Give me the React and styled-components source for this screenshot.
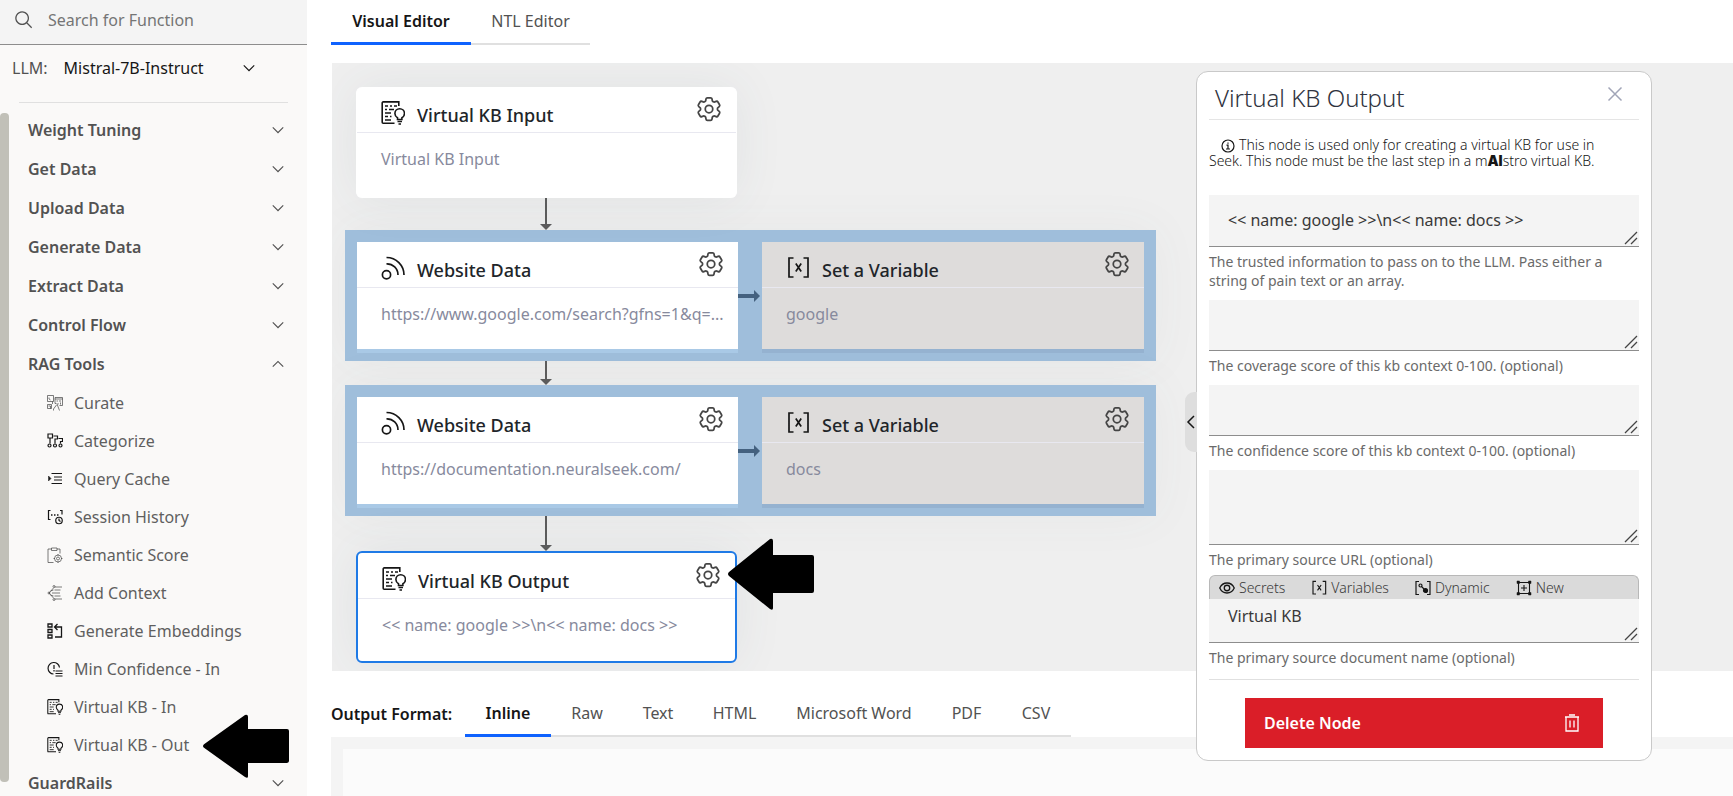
import React from "react";
import styled, { createGlobalStyle, css } from "styled-components";
import { HiOutlineCog6Tooth } from "react-icons/hi2";

const GlobalStyle = createGlobalStyle`
  *, *::before, *::after { box-sizing: border-box; }
  body { margin: 0; background: #ffffff; }
  body, button, input, select, textarea {
    font-family: "Noto Sans", "Liberation Sans", sans-serif;
    font-size: 16px;
  }
  button { border: 0; padding: 0; background: none; color: inherit; cursor: pointer; }
  h2, p, ul { margin: 0; padding: 0; }
  li { list-style: none; }
`;

/* ---------- icons ---------- */

const Glyph = styled.svg`
  display: block;
  flex: none;
  fill: none;
  stroke: currentColor;
`;

const SearchIcon = () => (
  <Glyph width="20" height="20" viewBox="0 0 32 32" aria-hidden="true">
    <path stroke="none" fill="currentColor" d="M29,27.5859l-7.5521-7.5521a11.0177,11.0177,0,1,0-1.4141,1.4141L27.5859,29ZM4,13a9,9,0,1,1,9,9A9.01,9.01,0,0,1,4,13Z" />
  </Glyph>
);

const Chevron = ({ up, size = 18 }) => (
  <Glyph width={size} height={size} viewBox="0 0 16 16" aria-hidden="true">
    <path stroke="none" fill="currentColor" d={up ? "M8 5l5 5-.7.7L8 6.4l-4.3 4.3L3 10z" : "M8 11L3 6l.7-.7L8 9.6l4.3-4.3.7.7z"} />
  </Glyph>
);

const DocBulbIcon = ({ size = 24 }) => (
  <Glyph width={size} height={size} viewBox="0 0 24 24" strokeWidth="1.6" aria-hidden="true">
    <path d="M13.5 22.2H2.2a1 1 0 0 1-1-1V1.9a1 1 0 0 1 1-1h15.6V5" />
    <path d="M4 5h3M9 5h2M13 5h3M4 8.5h2M8 8.5h5M4 12h6M4 15.5h3M9 15.5h1.500M4 19h6" strokeWidth="1.3" />
    <path d="M16.500 18.500v-1.700c-1.600-1-2.600-2.400-2.600-4.300a4.800 4.800 0 0 1 9.600 0c0 1.900-1 3.300-2.600 4.300v1.700z" />
    <path d="M16.500 20.500h4.500M17.500 23h2.500" strokeWidth="1.400" />
  </Glyph>
);

const FeedIcon = () => (
  <Glyph width="24" height="24" viewBox="0 0 24 24" strokeWidth="1.700" aria-hidden="true">
    <circle cx="5.500" cy="18.800" r="4.100" />
    <path d="M5.500 7.800A11 11 0 0 1 17 19M5.500 1.500A17.500 17.500 0 0 1 23 19" />
  </Glyph>
);

const VariableIcon = ({ size = 24 }) => (
  <Glyph width={size} height={size} viewBox="0 0 24 24" strokeWidth="1.700" aria-hidden="true">
    <path d="M7.500 2H3v19h4.500M17.500 2H22v19h-4.500M9.800 7.500l5.400 8M15.200 7.500l-5.400 8" />
  </Glyph>
);

const SmallIcon = ({ children, faint, w = 2.4 }) => (
  <Glyph width="16" height="16" viewBox="0 0 32 32" strokeWidth={faint ? 1.3 : w} opacity={faint ? 0.85 : 1} aria-hidden="true">
    {children}
  </Glyph>
);

const icons = {
  curate: (
    <SmallIcon faint>
      <path d="M1 1h12v12H1zM4 5v3l3 2M16 5h15v16h-6M16 5v12h3M16 8h15M19 12h3M24 12h4M27 15v4M22 16v3M1 19h8v8H1zM3 22h4v5M19 20l-6 8v3M20 18l5 13M11 13v5" />
    </SmallIcon>
  ),
  categorize: (
    <SmallIcon>
      <path d="M2 2h9v8H2zM6 10v11M13 6h8v6h-5v9M23 11h8v6h-4v4" />
      <circle cx="5" cy="25" r="3" /><circle cx="16" cy="25" r="3" /><circle cx="27" cy="25" r="3" />
    </SmallIcon>
  ),
  cache: (
    <SmallIcon w={2}>
      <path d="M9 5h21M14 12h16M14 18h16M9 25h21" />
      <path d="M3 10l5 5-5 5z" fill="currentColor" strokeWidth="1" />
    </SmallIcon>
  ),
  history: (
    <SmallIcon>
      <path d="M7 3H3v18h4M26 3h4v8" />
      <path d="M8 12h3M14 12h3M20 12h3" strokeWidth="3" />
      <circle cx="24" cy="23" r="6.500" /><path d="M24 19v4l3 2" />
    </SmallIcon>
  ),
  score: (
    <SmallIcon faint>
      <path d="M13 31H2V4h7M20 4h6v9M9 2h11v5H9z" />
      <circle cx="22" cy="23" r="7" /><circle cx="22" cy="23" r="3" /><path d="M22 14v3M22 29v3M13 23h3M28 23h3" />
    </SmallIcon>
  ),
  context: (
    <SmallIcon faint>
      <path d="M15 4h15M15 10h12M10 16h16M15 22h12M15 28h15M4 16l9-10M4 16l9 10M7 12l6-2M7 20l6 2" />
      <circle cx="14" cy="3" r="2" /><circle cx="4" cy="16" r="2" /><circle cx="14" cy="29" r="2" />
    </SmallIcon>
  ),
  embed: (
    <SmallIcon w={2.6}>
      <path d="M2 2h8v6H2zM2 13h8v6H2zM2 24h8v6H2zM16 8h13v20H16M21 2l-6 6 6 6" />
    </SmallIcon>
  ),
  confidence: (
    <SmallIcon>
      <path d="M13 26A11.500 11.500 0 1 1 25 13M14 8v8M14 18v3M17 20h14M17 25h14M17 30h14" />
    </SmallIcon>
  ),
  kb: <DocBulbIcon size={16} />,
};

const CloseIcon = () => (
  <Glyph width="16" height="16" viewBox="0 0 16 16" strokeWidth="1.500" aria-hidden="true">
    <path d="M1.500 1.500l13 13M14.500 1.500l-13 13" />
  </Glyph>
);

const TrashIcon = () => (
  <Glyph width="18" height="20" viewBox="0 0 18 20" strokeWidth="1.300" aria-hidden="true">
    <path d="M2 4h14M6 2h6M3 4v14h12V4M7 7.500v7M11 7.500v7" />
  </Glyph>
);

const EyeIcon = () => (
  <Glyph width="16" height="16" viewBox="0 0 32 32" strokeWidth="2.600" aria-hidden="true">
    <path d="M1.500 16C4.500 9.500 9.800 6 16 6s11.500 3.500 14.500 10c-3 6.500-8.300 10-14.500 10S4.500 22.500 1.500 16z" />
    <circle cx="16" cy="16" r="5.500" />
  </Glyph>
);

const DynamicIcon = () => (
  <Glyph width="16" height="16" viewBox="0 0 32 32" strokeWidth="2.400" aria-hidden="true">
    <path d="M8 3H2v26h6M24 3h6v26h-6M13 13l6 6" />
    <circle cx="11" cy="11" r="3" /><circle cx="21" cy="21" r="4" fill="currentColor" />
  </Glyph>
);

const NewIcon = () => (
  <Glyph width="16" height="16" viewBox="0 0 32 32" strokeWidth="2.200" aria-hidden="true">
    <path d="M5 5h22v22H5zM16 10v12M10 16h12" />
    <path d="M2 2h5v5H2zM25 2h5v5h-5zM2 25h5v5H2zM25 25h5v5h-5z" fill="currentColor" strokeWidth="1" />
  </Glyph>
);

const InfoIcon = styled(Glyph)`
  display: inline-block;
  vertical-align: -3px;
  margin: 0 4px 0 12px;
`;

const Pointer = styled.svg`
  position: absolute;
  top: ${(p) => p.$top}px;
  left: ${(p) => p.$left}px;
  width: 86px;
  height: ${(p) => p.$height}px;
  z-index: 2;
`;

/* ---------- page ---------- */

const Page = styled.div`
  position: relative;
  display: flex;
  height: 100vh;
  overflow: hidden;
`;

const Sidebar = styled.aside`
  flex: none;
  width: 307px;
  display: flex;
  flex-direction: column;
  background: #faf9f8;
  color: #525252;
`;

const SearchBox = styled.label`
  flex: none;
  display: flex;
  align-items: center;
  gap: 14px;
  height: 45px;
  padding: 0 14px 4px;
  background: #f4f4f4;
  border-bottom: 1px solid #8d8d8d;
`;

const SearchInput = styled.input`
  flex: 1;
  min-width: 0;
  padding: 0;
  border: 0;
  outline: 0;
  background: none;
  &::placeholder { color: #757575; opacity: 1; }
`;

const ModelRow = styled.label`
  flex: none;
  display: flex;
  align-items: center;
  gap: 16px;
  height: 57px;
  padding: 0 12px 12px;
`;

const SelectWrap = styled.span`
  display: grid;
  align-items: center;
  width: 194px;
  color: #161616;
  > * { grid-area: 1 / 1; }
  > svg { justify-self: end; pointer-events: none; }
`;

const Select = styled.select`
  appearance: none;
  border: 0;
  padding: 0;
  background: none;
  color: #161616;
`;

const Divider = styled.hr`
  flex: none;
  width: auto;
  height: 1px;
  border: 0;
  margin: ${(p) => p.$margin || "0"};
  background: #e0e0e0;
`;

const NavArea = styled.div`
  flex: 1;
  min-height: 0;
  display: flex;
  padding-top: 10px;
`;

const ScrollThumb = styled.div`
  flex: none;
  width: 9px;
  margin-bottom: 14px;
  border-radius: 4px;
  background: #c1c0b8;
`;

const NavList = styled.ul`
  flex: 1;
`;

const Category = styled.button`
  display: flex;
  align-items: center;
  justify-content: space-between;
  width: 100%;
  height: 39px;
  padding: 0 20px 6px 19px;
  font-weight: 600;
`;

const SubItem = styled.li`
  position: relative;
`;

const SubButton = styled.button`
  display: flex;
  align-items: center;
  gap: 11px;
  width: 100%;
  height: 38px;
  padding: 0 0 4px 38px;
  color: #5f5f5f;
  > svg { color: #161616; }
`;

const Main = styled.main`
  flex: 1;
  min-width: 0;
  display: flex;
  flex-direction: column;
  padding-left: 24px;
`;

const TabList = styled.div`
  display: grid;
  grid-template-columns: ${(p) => p.$columns};
`;

const Tab = styled.button`
  height: 45px;
  padding-bottom: 2px;
  white-space: nowrap;
  color: #525252;
  border-bottom: 2px solid #e0e0e0;
  ${(p) => p.$active && css`
    padding-bottom: 0;
    color: #161616;
    font-weight: 600;
    border-bottom: 3px solid #0f62fe;
  `}
`;

const Canvas = styled.section`
  flex: none;
  margin: 18px 0 0 1px;
  padding: 24px 0 8px 13px;
  background: #efefef;
  overflow: hidden;
`;

const Node = styled.article`
  position: relative;
  width: 381px;
  height: 111px;
  margin-left: 11px;
  border: 0 solid #ffffff;
  border-width: 0 1px;
  border-radius: 6px;
  background: #ffffff;
  box-shadow: 0 0 50px rgba(70, 95, 100, 0.08);
  ${(p) => p.$selected && css`
    height: 112px;
    border: 2px solid #1f7ae6;
  `}
`;

const Group = styled.div`
  display: grid;
  grid-template-columns: 381px 24px 382px;
  width: 811px;
  padding: 12px 12px 8px;
  background: #9fbedb;
  box-shadow: 0 0 50px rgba(70, 95, 100, 0.05);
`;

const GroupNode = styled.article`
  height: 111px;
  border-bottom: 4px solid ${(p) => (p.$muted ? "#95b2d0" : "#a9c9e6")};
  background: ${(p) => (p.$muted ? "#dedcdb" : "#ffffff")};
`;

const NodeHeader = styled.header`
  display: flex;
  align-items: center;
  gap: 12px;
  height: 46px;
  padding: 0 12px 0 24px;
  border-bottom: 1px solid #e8e8f0;
  color: #161616;
  > svg { margin-top: 6px; }
`;

const NodeTitle = styled.h2`
  flex: 1;
  padding-top: 10px;
  font-size: 18px;
  font-weight: 500;
  line-height: 26px;
  color: #212529;
`;

const NodeText = styled.p`
  padding: 13px 4px 0 24px;
  line-height: 26px;
  white-space: nowrap;
  overflow: hidden;
  color: #878a9d;
`;

const GearButton = styled.button`
  display: flex;
  margin-bottom: 2px;
  color: #454545;
  svg { stroke-width: 1.4; }
`;

const DownArrow = styled.div`
  display: flex;
  flex-direction: column;
  align-items: center;
  width: 16px;
  height: ${(p) => p.$height}px;
  margin-left: 193px;
  &::before { content: ""; flex: 1; width: 2px; background: #5c5c5c; }
  &::after {
    content: "";
    border: 6px solid transparent;
    border-top-color: #5c5c5c;
    border-bottom: 0;
  }
`;

const RightArrow = styled.div`
  display: flex;
  align-items: center;
  height: 107px;
  padding-right: 2px;
  &::before { content: ""; flex: 1; height: 4px; background: #44617f; }
  &::after {
    content: "";
    border: 6px solid transparent;
    border-left-color: #44617f;
    border-right: 0;
  }
`;

const OutputBar = styled.div`
  flex: none;
  display: flex;
  align-items: flex-end;
  height: 66px;
`;

const OutputLabel = styled.span`
  width: 134px;
  line-height: 46px;
  font-weight: 600;
  color: #161616;
`;

const OutputFrame = styled.section`
  flex: 1;
  display: flex;
  padding: 12px 0 0 12px;
  background: #f4f4f4;
`;

const OutputBody = styled.div`
  flex: 1;
  background: #fbfbfb;
`;

/* ---------- node properties ---------- */

const Panel = styled.form`
  position: absolute;
  top: 71px;
  right: 81px;
  width: 456px;
  padding: 0 12px 12px;
  border: 1px solid #c9c9c9;
  border-radius: 12px;
  background: #ffffff;
`;

const PanelToggle = styled.button`
  position: absolute;
  top: 320px;
  left: -12px;
  display: flex;
  align-items: center;
  width: 12px;
  height: 60px;
  border-radius: 9px 0 0 9px;
  background: #dedede;
  color: #161616;
`;

const PanelHeader = styled.header`
  display: flex;
  align-items: center;
  justify-content: space-between;
  height: 48px;
  padding: 0 16px 0 6px;
  border-bottom: 1px solid #e5e5e5;
`;

const PanelTitle = styled.h2`
  padding-top: 4px;
  font-size: 24px;
  font-weight: 300;
  line-height: 32px;
  color: #2f3340;
`;

const CloseButton = styled.button`
  display: flex;
  margin-bottom: 3px;
  color: #a1a5b7;
`;

const Note = styled.p`
  margin: 17px 0 27px;
  padding-right: 16px;
  font-size: 14px;
  font-weight: 300;
  line-height: 15px;
  color: #161616;
`;

const Brand = styled.b`
  font-family: Inter, sans-serif;
  font-weight: 900;
`;

const Field = styled.div`
  margin-top: ${(p) => p.$gap || 0}px;
`;

const grip = `url("data:image/svg+xml,%3Csvg xmlns='http://www.w3.org/2000/svg' width='15' height='15'%3E%3Cpath d='M1 13L13 1M7 13L13 7' stroke='%23444' stroke-width='1.300' fill='none'/%3E%3C/svg%3E")`;

const TextArea = styled.textarea`
  display: block;
  width: 100%;
  height: ${(p) => p.$height}px;
  padding: ${(p) => (p.$tight ? 4 : 12)}px 19px 0;
  border: 0;
  border-bottom: 1px solid #8d8d8d;
  border-radius: 0;
  outline: 0;
  background: #f4f4f4;
  color: #393939;
  line-height: 26px;
  resize: vertical;
  overflow: hidden;
  &::-webkit-resizer { background: ${grip} no-repeat center; }
`;

const Helper = styled.label`
  display: block;
  margin-top: 5px;
  font-size: 14px;
  line-height: 19px;
  color: #6a6a6a;
`;

const Toolbar = styled.div`
  display: flex;
  gap: 26px;
  height: 24px;
  padding: 0 9px;
  border: 1px solid #b8b8b8;
  border-bottom: 0;
  border-radius: 6px 6px 0 0;
  background: #dadada;
`;

const ToolButton = styled.button`
  display: flex;
  align-items: center;
  gap: 4px;
  font-size: 14px;
  font-weight: 300;
  color: #393939;
  > svg { color: #161616; }
`;

const DeleteButton = styled.button`
  display: flex;
  align-items: center;
  justify-content: space-between;
  width: 358px;
  height: 50px;
  margin: 0 auto;
  padding: 0 22px 0 19px;
  background: #da1e28;
  color: #ffffff;
  font-weight: 600;
`;

/* ---------- content ---------- */

const categories = ["Weight Tuning", "Get Data", "Upload Data", "Generate Data", "Extract Data", "Control Flow"];

const ragTools = [
  ["Curate", "curate"],
  ["Categorize", "categorize"],
  ["Query Cache", "cache"],
  ["Session History", "history"],
  ["Semantic Score", "score"],
  ["Add Context", "context"],
  ["Generate Embeddings", "embed"],
  ["Min Confidence - In", "confidence"],
  ["Virtual KB - In", "kb"],
  ["Virtual KB - Out", "kb"],
];

const formats = ["Inline", "Raw", "Text", "HTML", "Microsoft Word", "PDF", "CSV"];

const fields = [
  { id: "trusted", gap: 0, height: 52, value: "<< name: google >>\\n<< name: docs >>", help: "The trusted information to pass on to the LLM. Pass either a string of pain text or an array." },
  { id: "coverage", gap: 10, height: 51, help: "The coverage score of this kb context 0-100. (optional)" },
  { id: "confidence", gap: 10, height: 51, help: "The confidence score of this kb context 0-100. (optional)" },
  { id: "url", gap: 10, height: 75, help: "The primary source URL (optional)" },
  { id: "document", gap: 6, height: 44, value: "Virtual KB", tools: true, help: "The primary source document name (optional)" },
];

const NodeContent = ({ icon, title, text }) => (
  <>
    <NodeHeader>
      {icon}
      <NodeTitle>{title}</NodeTitle>
      <GearButton type="button" aria-label={`${title} settings`}><HiOutlineCog6Tooth size={30} /></GearButton>
    </NodeHeader>
    <NodeText>{text}</NodeText>
  </>
);

const Branch = ({ url, name }) => (
  <Group>
    <GroupNode><NodeContent icon={<FeedIcon />} title="Website Data" text={url} /></GroupNode>
    <RightArrow />
    <GroupNode $muted><NodeContent icon={<VariableIcon />} title="Set a Variable" text={name} /></GroupNode>
  </Group>
);

const BlackArrow = ({ top, left, height }) => (
  <Pointer $top={top} $left={left} $height={height} viewBox="0 0 86 72" preserveAspectRatio="none" aria-hidden="true">
    <path d="M1 34L42 1q3-1 3 2v14h39q2 0 2 2v34q0 2-2 2H45v15q0 3-3 1L1 38q-2-2 0-4z" fill="#000" />
  </Pointer>
);

const CategoryRow = ({ name, open }) => (
  <Category type="button" aria-expanded={!!open}>{name}<Chevron up={open} /></Category>
);

export default function App() {
  return (
    <Page>
      <GlobalStyle />
      <Sidebar>
        <SearchBox>
          <SearchIcon />
          <SearchInput type="search" placeholder="Search for Function" aria-label="Search for Function" />
        </SearchBox>
        <ModelRow>
          LLM:
          <SelectWrap>
            <Select defaultValue="Mistral-7B-Instruct"><option>Mistral-7B-Instruct</option></Select>
            <Chevron />
          </SelectWrap>
        </ModelRow>
        <Divider $margin="0 19px" />
        <NavArea>
          <ScrollThumb />
          <NavList>
            {categories.map((name) => <li key={name}><CategoryRow name={name} /></li>)}
            <li>
              <CategoryRow name="RAG Tools" open />
              <ul>
                {ragTools.map(([name, icon]) => (
                  <SubItem key={name}>
                    <SubButton type="button">{icons[icon]}{name}</SubButton>
                    {name === "Virtual KB - Out" && <BlackArrow top={-14} left={194} height={64} />}
                  </SubItem>
                ))}
              </ul>
            </li>
            <li><CategoryRow name="GuardRails" /></li>
          </NavList>
        </NavArea>
      </Sidebar>

      <Main>
        <TabList role="tablist" $columns="140px 119px">
          <Tab role="tab" aria-selected="true" $active>Visual Editor</Tab>
          <Tab role="tab" aria-selected="false">NTL Editor</Tab>
        </TabList>
        <Canvas>
          <Node><NodeContent icon={<DocBulbIcon />} title="Virtual KB Input" text="Virtual KB Input" /></Node>
          <DownArrow $height={32} />
          <Branch url="https://www.google.com/search?gfns=1&q=..." name="google" />
          <DownArrow $height={24} />
          <Branch url="https://documentation.neuralseek.com/" name="docs" />
          <DownArrow $height={35} />
          <Node $selected>
            <NodeContent icon={<DocBulbIcon />} title="Virtual KB Output" text={"<< name: google >>\\n<< name: docs >>"} />
            <BlackArrow top={-15} left={370} height={72} />
          </Node>
        </Canvas>
        <OutputBar>
          <OutputLabel>Output Format:</OutputLabel>
          <TabList role="tablist" $columns="86px 72px 70px 83px 156px 69px 70px">
            {formats.map((name, i) => (
              <Tab key={name} role="tab" aria-selected={i === 0} $active={i === 0}>{name}</Tab>
            ))}
          </TabList>
        </OutputBar>
        <OutputFrame><OutputBody /></OutputFrame>
      </Main>

      <Panel>
        <PanelToggle type="button" aria-label="Collapse panel">
          <Glyph width="12" height="16" viewBox="0 0 12 16" strokeWidth="1.500" aria-hidden="true"><path d="M9 2L3 8l6 6" /></Glyph>
        </PanelToggle>
        <PanelHeader>
          <PanelTitle>Virtual KB Output</PanelTitle>
          <CloseButton type="button" aria-label="Close"><CloseIcon /></CloseButton>
        </PanelHeader>
        <Note>
          <InfoIcon width="14" height="14" viewBox="0 0 14 14" strokeWidth="1.200" aria-hidden="true">
            <circle cx="7" cy="7" r="6" /><path d="M5.500 6.200H7V10M5 10h4M7 3.500v1.300" />
          </InfoIcon>
          This node is used only for creating a virtual KB for use in Seek. This node must be the last step in a m<Brand>AI</Brand>stro virtual KB.
        </Note>
        {fields.map((f) => (
          <Field key={f.id} $gap={f.gap}>
            {f.tools && (
              <Toolbar>
                <ToolButton type="button"><EyeIcon />Secrets</ToolButton>
                <ToolButton type="button"><VariableIcon size={16} />Variables</ToolButton>
                <ToolButton type="button"><DynamicIcon />Dynamic</ToolButton>
                <ToolButton type="button"><NewIcon />New</ToolButton>
              </Toolbar>
            )}
            <TextArea id={f.id} rows={1} $height={f.height} $tight={f.tools} defaultValue={f.value} />
            <Helper htmlFor={f.id}>{f.help}</Helper>
          </Field>
        ))}
        <Divider $margin="12px 0 18px" />
        <DeleteButton type="button">Delete Node<TrashIcon /></DeleteButton>
      </Panel>
    </Page>
  );
}
